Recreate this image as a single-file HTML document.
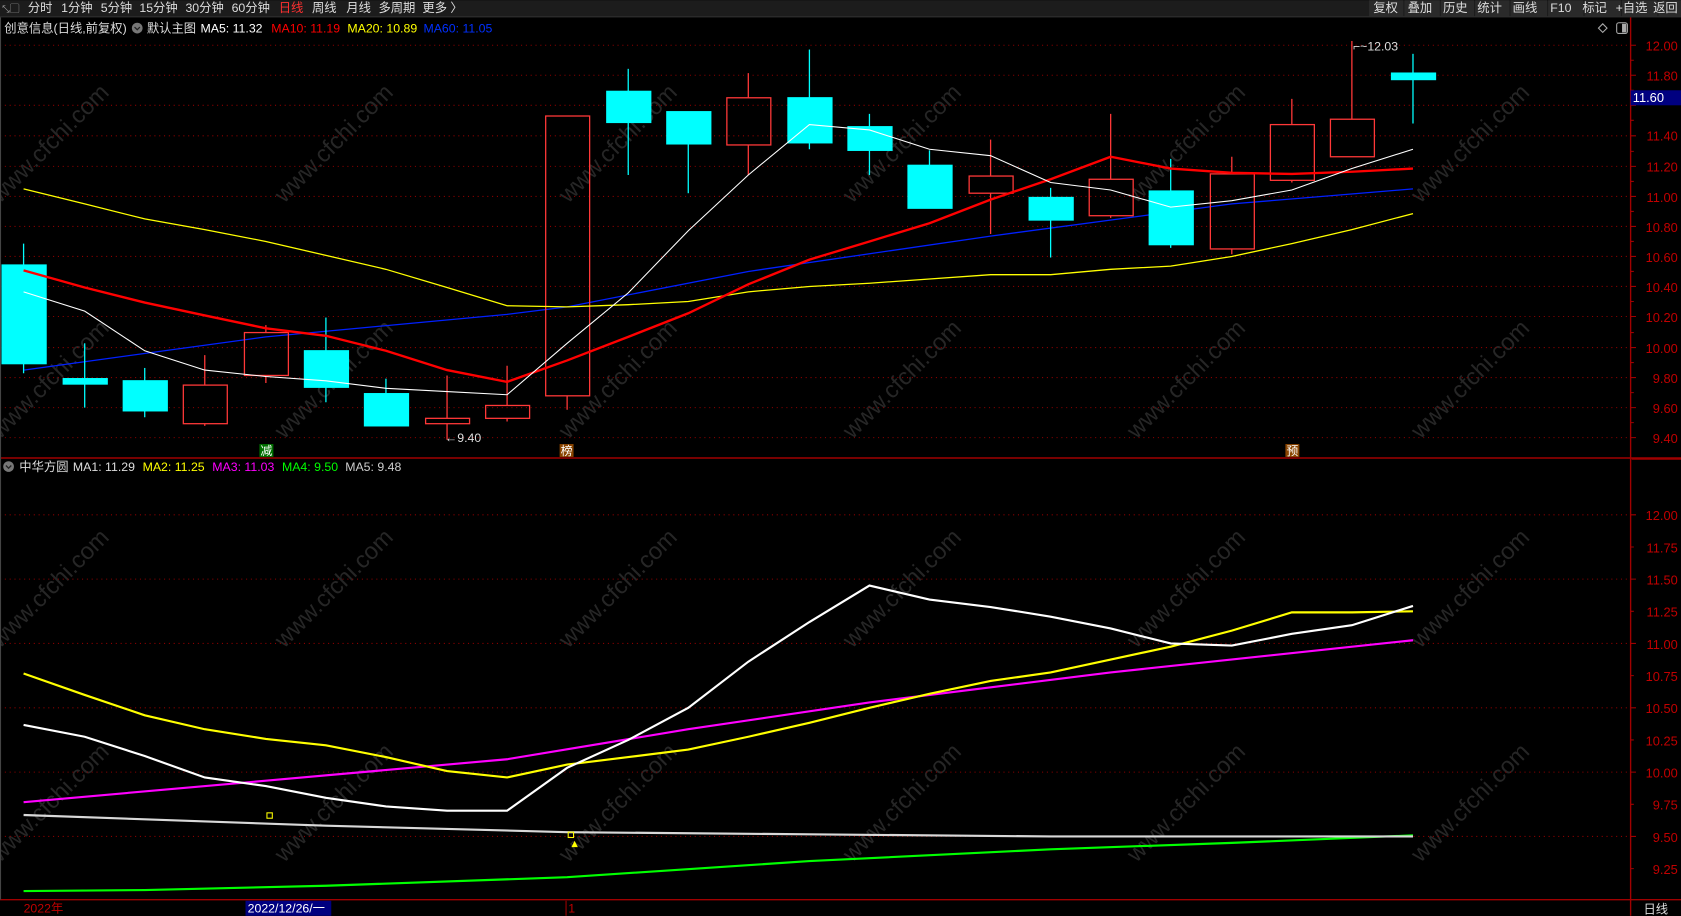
<!DOCTYPE html>
<html><head><meta charset="utf-8"><style>
html,body{margin:0;padding:0;background:#000;width:1681px;height:916px;overflow:hidden}
svg{display:block}
text{font-family:"Liberation Sans","Noto Sans CJK SC",sans-serif}
</style></head><body>
<svg width="1681" height="916" viewBox="0 0 1568 854" xmlns="http://www.w3.org/2000/svg">
<rect width="1568" height="854" fill="#000"/>
<!-- toolbar -->
<rect x="0" y="0" width="1568" height="15" fill="#1c1c1c"/>
<line x1="0" y1="15.5" x2="1568" y2="15.5" stroke="#333"/>
<g font-size="11.5" fill="#ddd">
<text x="2" y="11" font-size="9" fill="#aaa">⤡▢</text>
<text x="26" y="11">分时</text><text x="57" y="11">1分钟</text><text x="94" y="11">5分钟</text>
<text x="130" y="11">15分钟</text><text x="173" y="11">30分钟</text><text x="216" y="11">60分钟</text>
<text x="260" y="11" fill="#ff3030">日线</text><text x="291" y="11">周线</text><text x="323" y="11">月线</text>
<text x="353" y="11">多周期</text><text x="394" y="11">更多 〉</text>
</g>
<g fill="#2a2a2a">
<rect x="1277" y="0" width="32" height="15"/><rect x="1310" y="0" width="33" height="15"/><rect x="1344" y="0" width="31" height="15"/>
<rect x="1376" y="0" width="32" height="15"/><rect x="1409" y="0" width="34" height="15"/><rect x="1444" y="0" width="33" height="15"/>
<rect x="1478" y="0" width="34" height="15"/><rect x="1513" y="0" width="33" height="15"/><rect x="1547" y="0" width="21" height="15"/>
</g>
<g font-size="11.5" fill="#ddd">
<text x="1281" y="11">复权</text><text x="1313" y="11">叠加</text><text x="1346" y="11">历史</text><text x="1378" y="11">统计</text>
<text x="1411" y="11">画线</text><text x="1446" y="11">F10</text><text x="1476" y="11">标记</text><text x="1507" y="11">+自选</text><text x="1542" y="11">返回</text>
</g>
<!-- info row -->
<g font-size="11.5">
<text x="4" y="30" fill="#ddd">创意信息(日线,前复权)</text>
<circle cx="128" cy="26" r="5" fill="#777"/><path d="M125.5 25 L128 27.5 L130.5 25" stroke="#222" fill="none" stroke-width="1.2"/>
<text x="137" y="30" fill="#ddd">默认主图</text>
<text x="187" y="30" fill="#fff">MA5: 11.32</text>
<text x="253" y="30" fill="#ff0000">MA10: 11.19</text>
<text x="324" y="30" fill="#ffff00">MA20: 10.89</text>
<text x="395" y="30" fill="#0030ff">MA60: 11.05</text>
</g>
<path d="M1495 22 L1499 26 L1495 30 L1491 26Z" stroke="#aaa" fill="none"/>
<rect x="1508" y="21" width="10" height="10" rx="2" stroke="#aaa" fill="none"/><rect x="1513" y="22" width="4" height="8" fill="#aaa"/>
<!-- watermarks -->
<g font-size="22" fill="#262626" font-family="Liberation Sans,sans-serif">
<text transform="translate(0,190) rotate(-45)">www.cfchi.com</text>
<text transform="translate(265,190) rotate(-45)">www.cfchi.com</text>
<text transform="translate(530,190) rotate(-45)">www.cfchi.com</text>
<text transform="translate(795,190) rotate(-45)">www.cfchi.com</text>
<text transform="translate(1060,190) rotate(-45)">www.cfchi.com</text>
<text transform="translate(1325,190) rotate(-45)">www.cfchi.com</text>
<text transform="translate(0,410) rotate(-45)">www.cfchi.com</text>
<text transform="translate(265,410) rotate(-45)">www.cfchi.com</text>
<text transform="translate(530,410) rotate(-45)">www.cfchi.com</text>
<text transform="translate(795,410) rotate(-45)">www.cfchi.com</text>
<text transform="translate(1060,410) rotate(-45)">www.cfchi.com</text>
<text transform="translate(1325,410) rotate(-45)">www.cfchi.com</text>
<text transform="translate(0,605) rotate(-45)">www.cfchi.com</text>
<text transform="translate(265,605) rotate(-45)">www.cfchi.com</text>
<text transform="translate(530,605) rotate(-45)">www.cfchi.com</text>
<text transform="translate(795,605) rotate(-45)">www.cfchi.com</text>
<text transform="translate(1060,605) rotate(-45)">www.cfchi.com</text>
<text transform="translate(1325,605) rotate(-45)">www.cfchi.com</text>
<text transform="translate(0,805) rotate(-45)">www.cfchi.com</text>
<text transform="translate(265,805) rotate(-45)">www.cfchi.com</text>
<text transform="translate(530,805) rotate(-45)">www.cfchi.com</text>
<text transform="translate(795,805) rotate(-45)">www.cfchi.com</text>
<text transform="translate(1060,805) rotate(-45)">www.cfchi.com</text>
<text transform="translate(1325,805) rotate(-45)">www.cfchi.com</text>
</g>
<!-- grids -->
<g stroke="#8b0000" stroke-width="1" stroke-dasharray="1 3.5">
<line x1="0" y1="42" x2="1521" y2="42"/><line x1="0" y1="70" x2="1521" y2="70"/><line x1="0" y1="98" x2="1521" y2="98"/>
<line x1="0" y1="126.5" x2="1521" y2="126.5"/><line x1="0" y1="155" x2="1521" y2="155"/><line x1="0" y1="183" x2="1521" y2="183"/>
<line x1="0" y1="211" x2="1521" y2="211"/><line x1="0" y1="239" x2="1521" y2="239"/><line x1="0" y1="267" x2="1521" y2="267"/>
<line x1="0" y1="295" x2="1521" y2="295"/><line x1="0" y1="324" x2="1521" y2="324"/><line x1="0" y1="352" x2="1521" y2="352"/>
<line x1="0" y1="380" x2="1521" y2="380"/><line x1="0" y1="408" x2="1521" y2="408"/>
<line x1="0" y1="480" x2="1521" y2="480"/><line x1="0" y1="540" x2="1521" y2="540"/><line x1="0" y1="600" x2="1521" y2="600"/>
<line x1="0" y1="660" x2="1521" y2="660"/><line x1="0" y1="720" x2="1521" y2="720"/><line x1="0" y1="780" x2="1521" y2="780"/>
</g>
<!-- frame lines -->
<g stroke="#a00000" stroke-width="1.3">
<line x1="1521" y1="16" x2="1521" y2="854"/>
<line x1="0" y1="427" x2="1568" y2="427"/>
<line x1="0" y1="839" x2="1568" y2="839"/>
<line x1="1522" y1="428" x2="1568" y2="428"/>
</g>
<line x1="0.5" y1="16" x2="0.5" y2="839" stroke="#444"/>
<!-- axis labels upper -->
<g font-size="12" fill="#c00000" text-anchor="end">
<text x="1565" y="47">12.00</text><text x="1565" y="75">11.80</text><text x="1565" y="131">11.40</text>
<text x="1565" y="160">11.20</text><text x="1565" y="188">11.00</text><text x="1565" y="216">10.80</text>
<text x="1565" y="244">10.60</text><text x="1565" y="272">10.40</text><text x="1565" y="300">10.20</text>
<text x="1565" y="329">10.00</text><text x="1565" y="357">9.80</text><text x="1565" y="385">9.60</text><text x="1565" y="413">9.40</text>
<text x="1565" y="485">12.00</text><text x="1565" y="515">11.75</text><text x="1565" y="545">11.50</text><text x="1565" y="575">11.25</text>
<text x="1565" y="605">11.00</text><text x="1565" y="635">10.75</text><text x="1565" y="665">10.50</text><text x="1565" y="695">10.25</text>
<text x="1565" y="725">10.00</text><text x="1565" y="755">9.75</text><text x="1565" y="785">9.50</text><text x="1565" y="815">9.25</text>
</g>
<g stroke="#a00000">
<path d="M1521 42h5M1521 56h3M1521 70h5M1521 84h3M1521 98h5M1521 112h3M1521 126.5h5M1521 141h3M1521 155h5M1521 169h3M1521 183h5M1521 197h3M1521 211h5M1521 225h3M1521 239h5M1521 253h3M1521 267h5M1521 281h3M1521 295h5M1521 310h3M1521 324h5M1521 338h3M1521 352h5M1521 366h3M1521 380h5M1521 394h3M1521 408h5"/>
<path d="M1521 480h5M1521 510h3M1521 540h5M1521 570h3M1521 600h5M1521 630h3M1521 660h5M1521 690h3M1521 720h5M1521 750h3M1521 780h5M1521 810h3"/>
</g>
<rect x="1521" y="84" width="47" height="14" fill="#000080"/>
<text x="1523" y="95" font-size="12" fill="#fff">11.60</text>
<!-- MA60 blue -->
<polyline fill="none" stroke="#0020ff" stroke-width="1.2" points="22,345 248,314 473,293 529,286 698,253 924,220 1149,190 1318,176"/>
<!-- candles -->
<g stroke-width="1.2">
<g fill="#00ffff" stroke="#00ffff">
<line x1="22" y1="227" x2="22" y2="348"/><rect x="2" y="247" width="41" height="92"/>
<line x1="79" y1="320" x2="79" y2="380"/><rect x="59" y="353" width="41" height="5"/>
<line x1="135" y1="343" x2="135" y2="389"/><rect x="115" y="355" width="41" height="28"/>
<line x1="304" y1="296" x2="304" y2="375"/><rect x="284" y="327" width="41" height="34"/>
<line x1="360" y1="353" x2="360" y2="397"/><rect x="340" y="367" width="41" height="30"/>
<line x1="586" y1="64" x2="586" y2="163"/><rect x="566" y="85" width="41" height="29"/>
<line x1="642" y1="104" x2="642" y2="180"/><rect x="622" y="104" width="41" height="30"/>
<line x1="755" y1="46" x2="755" y2="139"/><rect x="735" y="91" width="41" height="42"/>
<line x1="811" y1="106" x2="811" y2="163"/><rect x="791" y="118" width="41" height="22"/>
<line x1="867" y1="140" x2="867" y2="194"/><rect x="847" y="154" width="41" height="40"/>
<line x1="980" y1="175" x2="980" y2="240"/><rect x="960" y="184" width="41" height="21"/>
<line x1="1092" y1="148" x2="1092" y2="231"/><rect x="1072" y="178" width="41" height="50"/>
<line x1="1318" y1="50" x2="1318" y2="115"/><rect x="1298" y="68" width="41" height="6"/>
</g>
<g fill="none" stroke="#ff3838">
<path d="M191 331V359M191 395V397"/><rect x="171" y="359" width="41" height="36"/>
<path d="M248 303V310M248 350V357"/><rect x="228" y="310" width="41" height="40"/>
<path d="M417 350V390M417 395V410"/><rect x="397" y="390" width="41" height="5"/>
<path d="M473 341V378M473 390V393"/><rect x="453" y="378" width="41" height="12"/>
<path d="M529 369V382"/><rect x="509" y="108" width="41" height="261"/>
<path d="M698 68V91M698 135V163"/><rect x="678" y="91" width="41" height="44"/>
<path d="M924 130V164M924 180V218"/><rect x="904" y="164" width="41" height="16"/>
<path d="M1036 106V167M1036 201V203"/><rect x="1016" y="167" width="41" height="34"/>
<path d="M1149 146V162M1149 232V237"/><rect x="1129" y="162" width="41" height="70"/>
<path d="M1205 92V116M1205 168V170"/><rect x="1185" y="116" width="41" height="52"/>
<path d="M1261 38V111"/><rect x="1241" y="111" width="41" height="35"/>
</g>
</g>
<!-- upper MAs -->
<polyline fill="none" stroke="#ffff00" stroke-width="1.2" points="22,176 79,190 135,204 191,214 248,225 304,238 360,251 417,268 473,285 529,286 586,284 642,281 698,272 755,267 811,264 867,260 924,256 980,256 1036,251 1092,248 1149,239 1205,227 1261,214 1318,199"/>
<polyline fill="none" stroke="#ff0000" stroke-width="2.2" points="22,252 79,268 135,282 191,294 248,306 304,313 360,327 417,345 473,356 529,336 586,314 642,292 698,265 755,242 811,225 867,208 924,186 980,167 1036,146 1092,157 1149,161 1205,162 1261,160 1318,157"/>
<polyline fill="none" stroke="#ffffff" stroke-width="1" points="22,272 79,290 135,327 191,345 248,351 304,355 360,362 417,365 473,368 529,320 586,273 642,215 698,163 755,116 811,121 867,139 924,145 980,170 1036,177 1092,193 1149,187 1205,177 1261,157 1318,139"/>
<!-- annotations -->
<g font-size="11.5" fill="#ddd">
<text x="415" y="412">←9.40</text>
<text x="1262" y="47">⌐~12.03</text>
</g>
<rect x="242" y="414" width="13" height="12" fill="#007000"/><text x="243" y="424" font-size="11" fill="#fff">减</text>
<rect x="522" y="414" width="13" height="12" fill="#8a4500"/><text x="523" y="424" font-size="11" fill="#fff">榜</text>
<rect x="1199" y="414" width="13" height="12" fill="#8a4500"/><text x="1200" y="424" font-size="11" fill="#fff">预</text>
<!-- lower info -->
<circle cx="8" cy="435" r="5" fill="#777"/><path d="M5.5 434 L8 436.5 L10.5 434" stroke="#222" fill="none" stroke-width="1.2"/>
<g font-size="11.5">
<text x="18" y="439" fill="#ddd">中华方圆</text>
<text x="68" y="439" fill="#ddd">MA1: 11.29</text>
<text x="133" y="439" fill="#ffff00">MA2: 11.25</text>
<text x="198" y="439" fill="#ff00ff">MA3: 11.03</text>
<text x="263" y="439" fill="#00ff00">MA4: 9.50</text>
<text x="322" y="439" fill="#ccc">MA5: 9.48</text>
</g>
<!-- lower lines -->
<polyline fill="none" stroke="#00ff00" stroke-width="2" points="22,831 135,830 304,826 529,818 755,803 980,792 1149,786 1318,779"/>
<polyline fill="none" stroke="#d8d8d8" stroke-width="2" points="22,760 135,764 304,770 529,776 755,778 980,780 1318,780"/>
<polyline fill="none" stroke="#ff00ff" stroke-width="2" points="22,748 248,728 473,708 642,680 811,655 1036,627 1318,597"/>
<polyline fill="none" stroke="#ffff00" stroke-width="2" points="22,628 79,648 135,667 191,680 248,689 304,695 360,706 417,719 473,725 529,713 586,706 642,699 698,687 755,674 811,660 867,647 924,635 980,627 1036,615 1092,603 1149,588 1205,571 1261,571 1318,570"/>
<polyline fill="none" stroke="#ffffff" stroke-width="2" points="22,676 79,687 135,705 191,725 248,733 304,744 360,752 417,756 473,756 529,716 586,690 642,660 698,617 755,580 811,546 867,559 924,566 980,575 1036,586 1092,600 1149,602 1205,591 1261,583 1318,565"/>
<rect x="249" y="758" width="5" height="5" fill="none" stroke="#ffff00"/>
<rect x="530" y="776" width="5" height="5" fill="none" stroke="#ffff00"/>
<path d="M533 790 L536 784 L539 790Z" fill="#ffff00"/>
<!-- bottom -->
<text x="22" y="851" font-size="11.5" fill="#c00000">2022年</text>
<rect x="229" y="840" width="80" height="14" fill="#000080"/>
<text x="231" y="851" font-size="11.5" fill="#fff">2022/12/26/一</text>
<line x1="528" y1="840" x2="528" y2="854" stroke="#a00000"/>
<text x="530" y="851" font-size="11.5" fill="#c00000">1</text>
<text x="1533" y="852" font-size="11.5" fill="#ddd">日线</text>
</svg>
</body></html>
